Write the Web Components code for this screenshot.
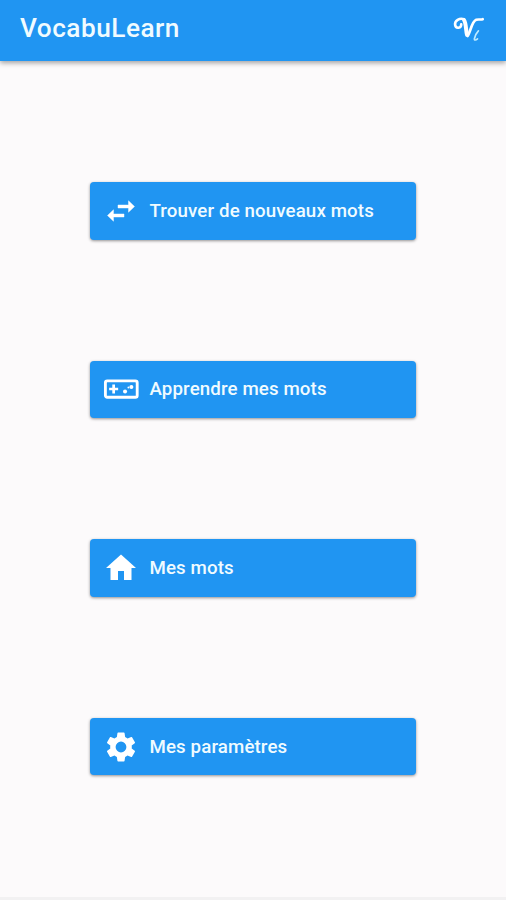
<!DOCTYPE html>
<html lang="fr">
<head>
<meta charset="utf-8">
<title>VocabuLearn</title>
<style>
html,body{margin:0;height:100%;overflow:hidden}
body{font-family:Roboto,"Liberation Sans",sans-serif;background:#fcfafb}
</style>
</head>
<body>
<vocab-app>
  <app-bar>VocabuLearn</app-bar>
  <menu-button icon="swap">Trouver de nouveaux mots</menu-button>
  <menu-button icon="game">Apprendre mes mots</menu-button>
  <menu-button icon="home">Mes mots</menu-button>
  <menu-button icon="gear">Mes paramètres</menu-button>
</vocab-app>
<script>
const icons = {
  swap: '<path d="M6.99 11.2 3 15l3.99 3.8v-2.8H14v-2H6.99zM21 9l-3.99-3.8V8H10v2h7.01v2.8z" stroke="currentColor" stroke-width=".3"/>',
  game: '<rect x="1.6" y="6.6" width="21.2" height="10.9" rx="1.2" fill="none" stroke="currentColor" stroke-width="1.9"/><path d="M6.2 9h1.8v2.1h2.1v1.8H8V15H6.2v-2.1H4.1v-1.8h2.1z"/><circle cx="14.7" cy="13.7" r="1.35"/><circle cx="18.9" cy="10.7" r="1.35"/><circle cx="16.9" cy="11" r=".6"/>',
  home: '<path d="M10 20v-6h4v6h5v-8h3L12 3 2 12h3v8z"/>',
  gear: '<path d="M19.14 12.94c.04-.3.06-.61.06-.94 0-.32-.02-.64-.07-.94l2.03-1.58a.49.49 0 0 0 .12-.61l-1.92-3.32a.488.488 0 0 0-.59-.22l-2.39.96c-.5-.38-1.03-.7-1.62-.94l-.36-2.54a.484.484 0 0 0-.48-.41h-3.84c-.24 0-.43.17-.47.41l-.36 2.54c-.59.24-1.13.57-1.62.94l-2.39-.96c-.22-.08-.47 0-.59.22L2.74 8.87c-.12.21-.08.47.12.61l2.03 1.58c-.05.3-.09.63-.09.94s.02.64.07.94l-2.03 1.58a.49.49 0 0 0-.12.61l1.92 3.32c.12.22.37.29.59.22l2.39-.96c.5.38 1.03.7 1.62.94l.36 2.54c.05.24.24.41.48.41h3.84c.24 0 .44-.17.47-.41l.36-2.54c.59-.24 1.13-.56 1.62-.94l2.39.96c.22.08.47 0 .59-.22l1.92-3.32c.12-.22.07-.47-.12-.61zM12 15.6A3.6 3.6 0 1 1 12 8.4a3.6 3.6 0 0 1 0 7.2z"/>'
};
class VocabApp extends HTMLElement {
  constructor() {
    super();
    this.attachShadow({mode:'open'}).innerHTML = `<style>
      :host{display:flex;flex-direction:column;align-items:center;box-sizing:border-box;height:100vh;background:#fcfafb;border-bottom:3px solid #f2f1f2}
      ::slotted(menu-button){margin-top:121px}
    </style><slot></slot>`;
  }
}
class AppBar extends HTMLElement {
  constructor() {
    super();
    this.attachShadow({mode:'open'}).innerHTML = `<style>
      :host{display:flex;align-items:center;justify-content:space-between;box-sizing:border-box;align-self:stretch;flex:none;height:61px;padding:0 20px 4px 20px;background:#2095f2;color:#f0fbff;box-shadow:0 2px 5px rgba(0,0,0,.36)}
      h1{margin:-2px 0 0;font-size:26.2px;font-weight:500;line-height:30px;letter-spacing:.5px;white-space:nowrap}
      svg{display:block;width:34px;height:32px;margin-top:2px}
    </style><h1><slot></slot></h1>
    <svg viewBox="0 0 34 32" fill="none" stroke="#fff" stroke-linecap="round" stroke-linejoin="round" aria-hidden="true">
      <path d="M9.2 10.4C9.4 14.2 3.8 15.4 3.1 10.8 2.5 6.6 7.6 3.6 12 5.2" stroke-width="2.6"/>
      <path d="M12 6C14.2 9.4 13.7 15.4 15 20.8" stroke-width="4"/>
      <path d="M15.6 22C18.6 18 19.6 7.6 24.2 5.8c2.3-.8 4.5.2 6.5-.6" stroke-width="2.7"/>
      <path d="M26.4 16.8c-1.7 1.7-3.4 5.3-4 7.9-.3 1.7 1.4 1.7 3.1.2" stroke-width="1.7" stroke="#bdeaff"/>
    </svg>`;
  }
}
class MenuButton extends HTMLElement {
  connectedCallback() {
    if (this.shadowRoot) return;
    this.attachShadow({mode:'open'}).innerHTML = `<style>
      :host{display:block;flex:none;width:326px;height:57.6px;color:#f0fbff}
      button{display:flex;align-items:center;gap:10.5px;width:100%;height:100%;padding:0 13px;border:0;border-radius:4px;background:#2095f2;color:inherit;font:500 18.7px/24px Roboto,"Liberation Sans",sans-serif;letter-spacing:.12px;white-space:nowrap;box-shadow:0 1px 3px rgba(0,0,0,.42)}
      svg{display:block;flex:none;width:36px;height:36px;fill:currentColor;color:#fff}
    </style><button><svg viewBox="0 0 24 24" aria-hidden="true">${icons[this.getAttribute('icon')]}</svg><span><slot></slot></span></button>`;
  }
}
customElements.define('vocab-app', VocabApp);
customElements.define('app-bar', AppBar);
customElements.define('menu-button', MenuButton);
</script>
</body>
</html>
